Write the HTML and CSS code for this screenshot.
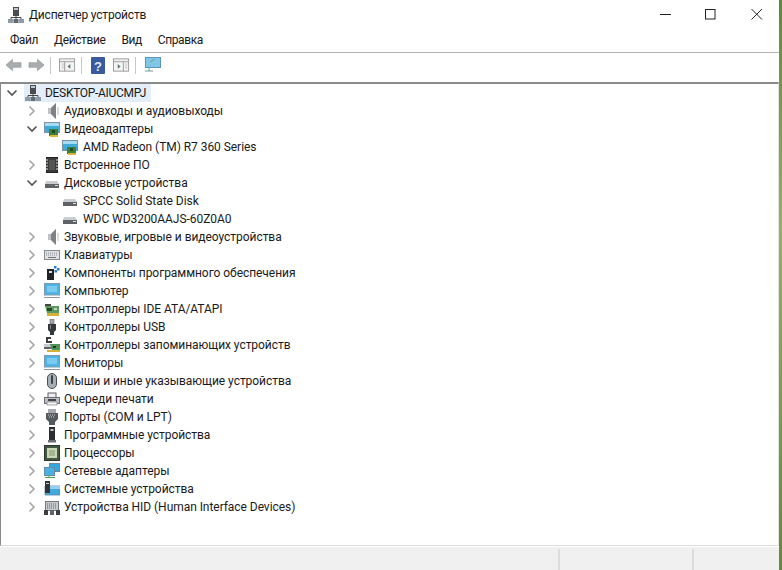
FILE: index.html
```html
<!DOCTYPE html>
<html lang="ru">
<head>
<meta charset="utf-8">
<title>Диспетчер устройств</title>
<link rel="stylesheet" href="styles.css">
</head>
<body>
<svg class="defs" width="0" height="0">
<defs>
<symbol id="chev-r" viewBox="0 0 16 16"><path d="M5.500 3.500 10 8l-4.500 4.500" fill="none" stroke="#a6a6a6" stroke-width="1.600"/></symbol>
<symbol id="chev-d" viewBox="0 0 16 16"><path d="M3.500 5.500 8 10l4.500-4.500" fill="none" stroke="#555" stroke-width="1.600"/></symbol>
<symbol id="i-pc" viewBox="0 0 16 16"><rect x="5" y="0" width="6" height="9" fill="#4a4d50"/><rect x="6" y="1" width="4" height="2" fill="#c4c7ca"/><path d="M8 9v3M3 12V10.500h10V12" fill="none" stroke="#444"/><rect x="0" y="12" width="5" height="4" fill="#8f9aa6"/><rect x="5.500" y="12" width="5" height="4" fill="#5f6a75"/><rect x="11" y="12" width="5" height="4" fill="#8f9aa6"/></symbol>
<symbol id="i-audio" viewBox="0 0 16 16"><path d="M4 5h3l5-5v16l-5-5H4z" fill="#bfc2c5"/><path d="M12 0v16l-5-5V5z" fill="#7e8286"/><path d="M14 4v8" stroke="#cfd2d4" stroke-width="1.500"/></symbol>
<symbol id="i-mon" viewBox="0 0 16 16"><rect x="0.500" y="0.500" width="15" height="11.500" fill="#4db4e8" stroke="#7f98ab"/><rect x="3" y="3" width="10" height="6" fill="#7ccbf1"/><path d="M0 14h16v1H0z" fill="#8b97a1"/></symbol>
<symbol id="i-video" viewBox="0 0 16 16"><rect x="0.500" y="1.500" width="15" height="10" fill="#40abd9" stroke="#7c93a5"/><path d="M1 2h14v3H1z" fill="#a5dcf2"/><path d="M5 15V8h9v7z" fill="#3e7d3a"/><path d="M6 14h8v2H6z" fill="#d9b93c"/><rect x="8" y="9" width="3" height="3" fill="#1e4d20"/></symbol>
<symbol id="i-fw" viewBox="0 0 16 16"><rect x="2.500" y="0.500" width="11" height="15" fill="#3b3b3b" stroke="#222"/><path d="M2 3h2M2 6h2M2 9h2M2 12h2M12 3h2M12 6h2M12 9h2M12 12h2" stroke="#ddd"/><rect x="5" y="3" width="6" height="10" fill="#555"/></symbol>
<symbol id="i-disk" viewBox="0 0 16 16"><path d="M2 6h11l2 3v4H1V9z" fill="#c9cdd1"/><rect x="1" y="9" width="14" height="4" fill="#5f6368"/><rect x="11" y="10" width="3" height="1" fill="#ddd"/></symbol>
<symbol id="i-kbd" viewBox="0 0 16 16"><rect x="0.500" y="3.500" width="15" height="9" fill="#dfe2e5" stroke="#868b90"/><path d="M2 6h12M2 8h12" stroke="#8b9096" stroke-dasharray="1 1"/><path d="M4 10.500h8" stroke="#777"/></symbol>
<symbol id="i-comp" viewBox="0 0 16 16"><rect x="3" y="4" width="7" height="11" fill="#1f2326"/><rect x="5" y="6" width="3" height="2" fill="#ddd"/><rect x="10" y="1" width="2.500" height="2.500" fill="#2a7fc4"/><rect x="13" y="3" width="2.500" height="2.500" fill="#2a7fc4"/><rect x="10.500" y="5" width="2.500" height="2.500" fill="#2a7fc4"/></symbol>
<symbol id="i-ide" viewBox="0 0 16 16"><path d="M1 5h14v7H3z" fill="#5c9960"/><rect x="3" y="7" width="5" height="3" fill="#1f4a24"/><rect x="10" y="7" width="3" height="2" fill="#cfd3cf"/><path d="M3 12h12v3H3z" fill="#d4b23a"/><path d="M1 3h6v2H1z" fill="#444"/></symbol>
<symbol id="i-usb" viewBox="0 0 16 16"><rect x="6" y="0" width="4" height="5" fill="#a4a8ac" stroke="#666" stroke-width=".6"/><path d="M4 5h8v6l-2 2v3H6v-3l-2-2z" fill="#35383b"/><rect x="6" y="6" width="1" height="4" fill="#888"/></symbol>
<symbol id="i-stor" viewBox="0 0 16 16"><path d="M2 0h5v2H4v2h4v2H2z" fill="#3c3f42"/><path d="M0 7h8l2 2v3H0z" fill="#c7cbcf"/><rect x="0" y="10" width="9" height="2" fill="#5f6368"/><path d="M6 7h10v6H8z" fill="#4f9358"/><rect x="9" y="9" width="3" height="2" fill="#173f1c"/><path d="M3 13h13v2H3z" fill="#d4b23a"/></symbol>
<symbol id="i-mouse" viewBox="0 0 16 16"><rect x="3.500" y="0.500" width="9" height="15" rx="4.500" fill="#a7b0b7" stroke="#4a4f55"/><rect x="7" y="2" width="2" height="9" rx="1" fill="#3d4248"/></symbol>
<symbol id="i-print" viewBox="0 0 16 16"><rect x="4" y="2" width="8" height="5" fill="#eee" stroke="#5a5f64"/><rect x="0.500" y="6.500" width="15" height="6" fill="#b8bec4" stroke="#6b7076"/><rect x="4" y="8" width="8" height="2" fill="#3f4347"/><rect x="3" y="11" width="10" height="3" fill="#f3f3f3" stroke="#777" stroke-width=".6"/></symbol>
<symbol id="i-port" viewBox="0 0 16 16"><rect x="4" y="0" width="8" height="4" fill="#a5a9ad"/><path d="M2 4h12v6l-3 3v3H5v-3l-3-3z" fill="#555a5f"/><path d="M4 6h8M5 8h6" stroke="#c8cbce" stroke-dasharray="1 1"/></symbol>
<symbol id="i-soft" viewBox="0 0 16 16"><rect x="5" y="0" width="6" height="13" fill="#2b2e31"/><rect x="6.500" y="2" width="3" height="2" fill="#ccc"/><rect x="4" y="13" width="8" height="2.500" fill="#6c7075"/></symbol>
<symbol id="i-cpu" viewBox="0 0 16 16"><rect x="0.500" y="0.500" width="15" height="15" fill="#3f5a3f" stroke="#333"/><rect x="3" y="3" width="10" height="10" fill="#c9d6b8"/><rect x="5" y="5" width="6" height="6" fill="#a3b68f"/></symbol>
<symbol id="i-net" viewBox="0 0 16 16"><rect x="5.500" y="0.500" width="10" height="8" fill="#35a7e0" stroke="#6c8aa0"/><rect x="0.500" y="4.500" width="10" height="8" fill="#48b2e4" stroke="#6c8aa0"/><path d="M1 14h10v1H1z" fill="#4aa04f"/><path d="M5 12v2" stroke="#4aa04f"/></symbol>
<symbol id="i-sys" viewBox="0 0 16 16"><path d="M1 5h15v9H1z" fill="#41a9dc" stroke="#5a87a3" stroke-width=".8"/><path d="M5 5h11v3H5z" fill="#92d2f0"/><rect x="1" y="0" width="5" height="12" fill="#2f3437"/><rect x="2" y="2" width="3" height="1" fill="#ccc"/></symbol>
<symbol id="i-hid" viewBox="0 0 16 16"><rect x="1.500" y="2.500" width="13" height="9" fill="#c6cacd" stroke="#73787d"/><path d="M3 5h10M3 7h10M3 9h10" stroke="#666a6f" stroke-dasharray="1 1"/><rect x="0" y="11" width="4" height="5" fill="#3a3e42"/><rect x="6" y="11" width="4" height="5" fill="#5e6368"/><rect x="12" y="11" width="4" height="5" fill="#3a3e42"/></symbol>
</defs>
</svg>
<div class="window">
  <header class="titlebar">
    <svg class="ico title-ico"><use href="#i-pc"/></svg>
    <span class="title">Диспетчер устройств</span>
    <div class="winbtns">
      <svg class="wb" viewBox="0 0 12 12"><path d="M0 5.500h11" stroke="#222" stroke-width="1"/></svg>
      <svg class="wb" viewBox="0 0 12 12"><rect x=".5" y=".5" width="9.500" height="9.500" fill="none" stroke="#222"/></svg>
      <svg class="wb" viewBox="0 0 12 12"><path d="M.5 0 11 10.500M11 0 .5 10.500" stroke="#222" fill="none"/></svg>
    </div>
  </header>
  <nav class="menu">
    <span>Файл</span><span>Действие</span><span>Вид</span><span>Справка</span>
  </nav>
  <div class="toolbar">
    <svg class="tb tb-arrow" viewBox="0 0 18 14"><path d="M1 7l7-6v3.500h9v5H8V13z" fill="#a9adaf" stroke="#8b8f92" stroke-width=".6"/></svg>
    <svg class="tb tb-arrow" viewBox="0 0 18 14"><path d="M17 7l-7-6v3.500H1v5h9V13z" fill="#a9adaf" stroke="#8b8f92" stroke-width=".6"/></svg>
    <i class="sep"></i>
    <svg class="tb" viewBox="0 0 18 16"><rect x=".5" y="1.500" width="16" height="13" fill="#f4f4f4" stroke="#999"/><path d="M1 4.500h15M6 4.500v10" stroke="#999"/><path d="M3 7h2M3 9h2M3 11h2" stroke="#bbb"/><path d="M12 7v5l-3-2.500z" fill="#5a7a6a"/></svg>
    <i class="sep"></i>
    <svg class="tb tb-help" viewBox="0 0 14 17"><rect width="14" height="17" rx="1" fill="#3a5a9e"/><text x="7" y="13.500" text-anchor="middle" class="q">?</text></svg>
    <svg class="tb" viewBox="0 0 18 16"><rect x=".5" y="1.500" width="16" height="13" fill="#f4f4f4" stroke="#999"/><path d="M1 4.500h15M11 4.500v10" stroke="#999"/><path d="M13 7h2M13 9h2M13 11h2" stroke="#bbb"/><path d="M5 7v5l3-2.500z" fill="#5a7a6a"/></svg>
    <i class="sep"></i>
    <svg class="tb tb-mon" viewBox="0 0 17 16"><rect x="1.500" y=".5" width="15" height="10" fill="#7fc6e8" stroke="#5b97b8"/><path d="M6 5l5-3M1 14h8M5 11v3" stroke="#6f9f9a"/></svg>
  </div>
  <main class="tree">
    <div class="row root">
      <svg class="chev"><use href="#chev-d"/></svg>
      <span class="sel"><svg class="ico"><use href="#i-pc"/></svg><span class="root-name">DESKTOP-AIUCMPJ</span></span>
    </div>
    <div class="row"><svg class="chev"><use href="#chev-r"/></svg><svg class="ico"><use href="#i-audio"/></svg><span>Аудиовходы и аудиовыходы</span></div>
    <div class="row"><svg class="chev"><use href="#chev-d"/></svg><svg class="ico"><use href="#i-video"/></svg><span>Видеоадаптеры</span></div>
    <div class="row child"><svg class="ico"><use href="#i-video"/></svg><span>AMD Radeon (TM) R7 360 Series</span></div>
    <div class="row"><svg class="chev"><use href="#chev-r"/></svg><svg class="ico"><use href="#i-fw"/></svg><span>Встроенное ПО</span></div>
    <div class="row"><svg class="chev"><use href="#chev-d"/></svg><svg class="ico"><use href="#i-disk"/></svg><span>Дисковые устройства</span></div>
    <div class="row child"><svg class="ico"><use href="#i-disk"/></svg><span>SPCC Solid State Disk</span></div>
    <div class="row child"><svg class="ico"><use href="#i-disk"/></svg><span>WDC WD3200AAJS-60Z0A0</span></div>
    <div class="row"><svg class="chev"><use href="#chev-r"/></svg><svg class="ico"><use href="#i-audio"/></svg><span>Звуковые, игровые и видеоустройства</span></div>
    <div class="row"><svg class="chev"><use href="#chev-r"/></svg><svg class="ico"><use href="#i-kbd"/></svg><span>Клавиатуры</span></div>
    <div class="row"><svg class="chev"><use href="#chev-r"/></svg><svg class="ico"><use href="#i-comp"/></svg><span>Компоненты программного обеспечения</span></div>
    <div class="row"><svg class="chev"><use href="#chev-r"/></svg><svg class="ico"><use href="#i-mon"/></svg><span>Компьютер</span></div>
    <div class="row"><svg class="chev"><use href="#chev-r"/></svg><svg class="ico"><use href="#i-ide"/></svg><span>Контроллеры IDE ATA/ATAPI</span></div>
    <div class="row"><svg class="chev"><use href="#chev-r"/></svg><svg class="ico"><use href="#i-usb"/></svg><span>Контроллеры USB</span></div>
    <div class="row"><svg class="chev"><use href="#chev-r"/></svg><svg class="ico"><use href="#i-stor"/></svg><span>Контроллеры запоминающих устройств</span></div>
    <div class="row"><svg class="chev"><use href="#chev-r"/></svg><svg class="ico"><use href="#i-mon"/></svg><span>Мониторы</span></div>
    <div class="row"><svg class="chev"><use href="#chev-r"/></svg><svg class="ico"><use href="#i-mouse"/></svg><span>Мыши и иные указывающие устройства</span></div>
    <div class="row"><svg class="chev"><use href="#chev-r"/></svg><svg class="ico"><use href="#i-print"/></svg><span>Очереди печати</span></div>
    <div class="row"><svg class="chev"><use href="#chev-r"/></svg><svg class="ico"><use href="#i-port"/></svg><span>Порты (COM и LPT)</span></div>
    <div class="row"><svg class="chev"><use href="#chev-r"/></svg><svg class="ico"><use href="#i-soft"/></svg><span>Программные устройства</span></div>
    <div class="row"><svg class="chev"><use href="#chev-r"/></svg><svg class="ico"><use href="#i-cpu"/></svg><span>Процессоры</span></div>
    <div class="row"><svg class="chev"><use href="#chev-r"/></svg><svg class="ico"><use href="#i-net"/></svg><span>Сетевые адаптеры</span></div>
    <div class="row"><svg class="chev"><use href="#chev-r"/></svg><svg class="ico"><use href="#i-sys"/></svg><span>Системные устройства</span></div>
    <div class="row"><svg class="chev"><use href="#chev-r"/></svg><svg class="ico"><use href="#i-hid"/></svg><span>Устройства HID (Human Interface Devices)</span></div>
  </main>
  <footer class="status"><i class="cell cell-main"></i><i class="cell cell-mid"></i><i class="cell"></i></footer>
</div>
<div class="edge"></div>
</body>
</html>
```
FILE: styles.css
```css
* { box-sizing: border-box; }
html, body { margin: 0; height: 100%; }
body {
  display: flex;
  width: 782px;
  height: 570px;
  overflow: hidden;
  background: #fff;
  font-family: Roboto, "Open Sans", sans-serif;
  font-size: 12px;
  line-height: 16px;
  color: #1a1a1a;
}
.defs { position: absolute; }
.window { flex: 1; min-width: 0; display: flex; flex-direction: column; background: #fff; }
.edge { width: 3px; background: linear-gradient(#5b8c3a, #8fb463 40%, #5f8b3c); }

.titlebar { height: 30px; display: flex; align-items: center; padding-left: 8px; }
.title-ico { margin-right: 5px; }
.title { letter-spacing: -0.2px; }
.winbtns { margin-left: auto; display: flex; gap: 33px; margin-right: 16px; }
.wb { width: 12px; height: 12px; display: block; }
.wb:last-child { margin-left: 1px; }

.menu { height: 23px; padding: 0 0 3px 10px; display: flex; align-items: center; gap: 16px; border-bottom: 1px solid #b4b4b4; letter-spacing: -0.4px; }

.toolbar { height: 24px; display: flex; align-items: center; padding-left: 5px; }
.tb { width: 17px; height: 16px; display: block; margin-left: 8px; }
.tb-arrow { height: 14px; margin-left: 6px; }
.tb-arrow:first-child { margin-left: 0; }
.tb-help { width: 14px; height: 17px; margin-left: 9px; }
.q { font: 700 13px "Liberation Sans", sans-serif; fill: #dfe7f5; }
.sep { width: 1px; height: 17px; background: #c8c8c8; margin-left: 5px; }

.tree {
  flex: 1;
  min-height: 0;
  margin-top: 5px;
  border-top: 2px solid #8a8a8a;
  border-left: 1px solid #8a8a8a;
  border-bottom: 1px solid #dcdcdc;
  border-right: 1px solid #e2e2e2;
  letter-spacing: -0.05px;
}
.row { height: 18px; display: flex; align-items: center; padding-left: 23px; white-space: nowrap; }
.row.child { padding-left: 61px; }
.row .ico { margin-left: 4px; margin-right: 4px; }
.row.child .ico { margin-left: 0; margin-right: 5px; }
.row.root { padding-left: 3px; }
.chev { width: 16px; height: 16px; flex: none; }
.ico { width: 16px; height: 16px; flex: none; display: block; }
.sel { display: flex; align-items: center; height: 18px; width: 127px; margin-left: 4px; background: #e3eef9; }
.row .sel .ico { margin: 0 4px 0 1px; }
.root-name { letter-spacing: -0.3px; }

.status { height: 23px; margin-top: 1px; background: #f0f0f0; display: flex; padding-top: 2px; }
.cell { display: block; border-left: 2px solid #dcdcdc; }
.cell-main { width: 558px; border-left: 0; }
.cell-mid { width: 134px; }
```
